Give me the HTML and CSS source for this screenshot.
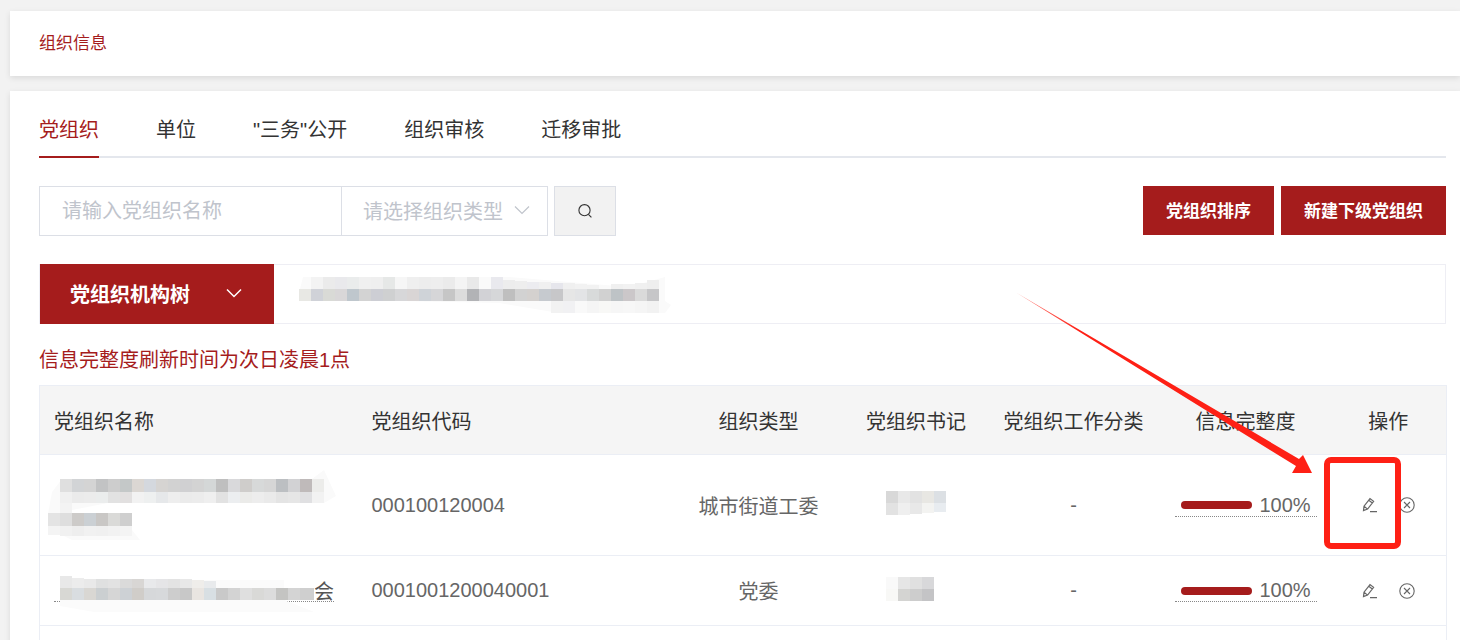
FILE: index.html
```html
<!DOCTYPE html>
<html lang="zh-CN">
<head>
  <meta charset="UTF-8">
  <title>组织信息</title>
  <link rel="stylesheet" href="styles.css">
</head>
<body>
  <div class="card title-card">组织信息</div>

  <div class="card main-card">
    <div class="tabs">
      <span class="tab active">党组织</span>
      <span class="tab">单位</span>
      <span class="tab">"三务"公开</span>
      <span class="tab">组织审核</span>
      <span class="tab">迁移审批</span>
    </div>

    <div class="toolbar">
      <input class="search-input" type="text" placeholder="请输入党组织名称">
      <div class="search-select">
        <span>请选择组织类型</span>
        <svg class="select-arrow" width="16" height="16" viewBox="0 0 16 16"><path d="M1 4.5l7 7 7-7" fill="none" stroke="#c0c4cc" stroke-width="1.2"/></svg>
      </div>
      <button class="search-btn" type="button">
        <svg width="16" height="16" viewBox="0 0 16 16"><circle cx="7.5" cy="7.2" r="5.6" fill="none" stroke="#333" stroke-width="1.1"/><path d="M11.4 11.4l3 3" fill="none" stroke="#333" stroke-width="1.1"/></svg>
      </button>
      <div class="toolbar-right">
        <button class="red-btn" type="button">党组织排序</button>
        <button class="red-btn" type="button">新建下级党组织</button>
      </div>
    </div>

    <div class="tree-bar">
      <div class="tree-toggle">
        <span>党组织机构树</span>
        <svg width="18" height="18" viewBox="0 0 18 18"><path d="M2 5.5l7 7 7-7" fill="none" stroke="#fff" stroke-width="1.5"/></svg>
      </div>
      <svg class="mosaic tree-mosaic" width="372" height="38" viewBox="0 0 372 38">
        <path d="M1 14 L4 2 H210 L330 12 L366 2 V26 L372 30 L366 38 H260 L200 28 L1 24z" fill="#fafafa"/>
        <g>
          <rect x="12" y="2" width="12" height="12" fill="#f3f3f3"/><rect x="24" y="2" width="12" height="12" fill="#ebebeb"/><rect x="36" y="2" width="12" height="12" fill="#e9e9ec"/><rect x="48" y="2" width="12" height="12" fill="#eaecec"/><rect x="60" y="2" width="12" height="12" fill="#f0f0f0"/><rect x="72" y="2" width="12" height="12" fill="#efefef"/><rect x="84" y="2" width="12" height="12" fill="#e6e8e7"/><rect x="96" y="2" width="12" height="12" fill="#f6f6f6"/><rect x="108" y="2" width="12" height="12" fill="#efefef"/><rect x="120" y="2" width="12" height="12" fill="#ededed"/><rect x="132" y="2" width="12" height="12" fill="#eeeeee"/><rect x="144" y="2" width="12" height="12" fill="#ebebeb"/><rect x="156" y="2" width="12" height="12" fill="#f4f4f4"/><rect x="168" y="2" width="12" height="12" fill="#e9e9e9"/><rect x="192" y="2" width="12" height="12" fill="#e9e9ee"/><rect x="204" y="5" width="12" height="9" fill="#ededed"/><rect x="216" y="6" width="12" height="8" fill="#eeeeee"/><rect x="228" y="7" width="12" height="7" fill="#ececf0"/><rect x="240" y="7" width="12" height="7" fill="#f0f0f0"/><rect x="252" y="8" width="12" height="6" fill="#e6e6ec"/><rect x="264" y="8" width="12" height="6" fill="#f0f0f0"/><rect x="276" y="9" width="12" height="5" fill="#f2f2f2"/><rect x="288" y="10" width="12" height="4" fill="#f2f2f2"/><rect x="312" y="9" width="12" height="5" fill="#f0f0f0"/><rect x="324" y="9" width="12" height="5" fill="#f2f2f2"/><rect x="336" y="8" width="12" height="6" fill="#f0f0f0"/><rect x="348" y="5" width="12" height="9" fill="#eeeeee"/>
        </g>
        <g>
          <rect x="0" y="14" width="12" height="12" fill="#e8e8e4"/><rect x="12" y="14" width="12" height="12" fill="#d0d2d8"/><rect x="24" y="14" width="12" height="12" fill="#d9dad6"/><rect x="36" y="14" width="12" height="12" fill="#d9d7d8"/><rect x="48" y="14" width="12" height="12" fill="#bfc7cd"/><rect x="60" y="14" width="12" height="12" fill="#d3d3d3"/><rect x="72" y="14" width="12" height="12" fill="#cdced4"/><rect x="84" y="14" width="12" height="12" fill="#cfd0d1"/><rect x="96" y="14" width="12" height="12" fill="#d7d7d9"/><rect x="108" y="14" width="12" height="12" fill="#d9d5d5"/><rect x="120" y="14" width="12" height="12" fill="#cfd3d8"/><rect x="132" y="14" width="12" height="12" fill="#d6d6d8"/><rect x="144" y="14" width="12" height="12" fill="#c6c6c6"/><rect x="156" y="14" width="12" height="12" fill="#dcdcdc"/><rect x="168" y="14" width="12" height="12" fill="#b2b3b6"/><rect x="180" y="14" width="12" height="12" fill="#d2d2d6"/><rect x="192" y="14" width="12" height="12" fill="#d6d7d9"/><rect x="204" y="14" width="12" height="12" fill="#bfbfbf"/><rect x="216" y="14" width="12" height="12" fill="#d2d2d2"/><rect x="228" y="14" width="12" height="12" fill="#d4d1cf"/><rect x="240" y="14" width="12" height="12" fill="#c6cacf"/><rect x="252" y="14" width="12" height="12" fill="#c7c7c9"/><rect x="264" y="14" width="12" height="12" fill="#e6e6e6"/><rect x="276" y="14" width="12" height="12" fill="#e3e4e6"/><rect x="288" y="14" width="12" height="12" fill="#d8dada"/><rect x="300" y="14" width="12" height="12" fill="#d1d1d1"/><rect x="312" y="14" width="12" height="12" fill="#bec3c6"/><rect x="324" y="14" width="12" height="12" fill="#cbc7c9"/><rect x="336" y="14" width="12" height="12" fill="#dadada"/><rect x="348" y="14" width="12" height="12" fill="#c6c6c8"/>
        </g>
        <g>
          <rect x="252" y="26" width="12" height="12" fill="#f2f2f2"/><rect x="264" y="26" width="12" height="12" fill="#f1f1f3"/><rect x="276" y="26" width="12" height="12" fill="#f9f9f9"/><rect x="288" y="26" width="12" height="12" fill="#f5f5f5"/><rect x="300" y="26" width="12" height="12" fill="#f8f8f6"/><rect x="312" y="26" width="12" height="12" fill="#f6f6f6"/><rect x="324" y="26" width="12" height="12" fill="#f7f7f7"/><rect x="336" y="26" width="12" height="12" fill="#f5f5f5"/><rect x="348" y="26" width="12" height="12" fill="#f2f2f2"/>
        </g>
      </svg>
    </div>

    <p class="notice">信息完整度刷新时间为次日凌晨1点</p>

    <table class="org-table">
      <colgroup>
        <col class="col-name"><col class="col-code"><col class="col-type"><col class="col-sec"><col class="col-cat"><col class="col-info"><col class="col-op">
      </colgroup>
      <thead>
        <tr>
          <th class="left">党组织名称</th>
          <th class="left">党组织代码</th>
          <th>组织类型</th>
          <th>党组织书记</th>
          <th>党组织工作分类</th>
          <th>信息完整度</th>
          <th>操作</th>
        </tr>
      </thead>
      <tbody>
        <tr class="row-tall">
          <td class="left">
            <svg class="mosaic name-mosaic" width="290" height="70" viewBox="0 0 290 70">
              <path d="M0 44 L4 22 L14 9 H264 L276 0 L288 26 L276 33 H60 L24 40 V60 L84 60 L92 70 H24 L4 60z" fill="#fafafa"/>
              <g>
                <rect x="12" y="9" width="12" height="13" fill="#dfdfdf"/><rect x="24" y="9" width="12" height="13" fill="#d2d4d6"/><rect x="36" y="9" width="12" height="13" fill="#d4d4d4"/><rect x="48" y="9" width="12" height="13" fill="#c2c3c4"/><rect x="60" y="9" width="12" height="13" fill="#cdcdcd"/><rect x="72" y="9" width="12" height="13" fill="#c4c8c8"/><rect x="84" y="9" width="12" height="13" fill="#dbd7d3"/><rect x="96" y="9" width="12" height="13" fill="#d4d8de"/><rect x="108" y="9" width="12" height="13" fill="#d6d4d2"/><rect x="120" y="9" width="12" height="13" fill="#d2d2d2"/><rect x="132" y="9" width="12" height="13" fill="#d0d0d2"/><rect x="144" y="9" width="12" height="13" fill="#d3d3d3"/><rect x="156" y="9" width="12" height="13" fill="#d4d7d7"/><rect x="168" y="9" width="12" height="13" fill="#bfbfbf"/><rect x="180" y="9" width="12" height="13" fill="#d9d9db"/><rect x="192" y="9" width="12" height="13" fill="#cfcdcb"/><rect x="204" y="9" width="12" height="13" fill="#d7d9d9"/><rect x="216" y="9" width="12" height="13" fill="#d6d6d6"/><rect x="228" y="9" width="12" height="13" fill="#bcbfc2"/><rect x="240" y="9" width="12" height="13" fill="#d2d2d4"/><rect x="252" y="9" width="12" height="13" fill="#bfbaba"/><rect x="264" y="9" width="12" height="13" fill="#ececea"/>
              </g>
              <g>
                <rect x="12" y="22" width="12" height="11" fill="#f0f0f0"/><rect x="24" y="22" width="12" height="11" fill="#ebebeb"/><rect x="36" y="22" width="12" height="11" fill="#ececec"/><rect x="48" y="22" width="12" height="11" fill="#ebeded"/><rect x="60" y="22" width="12" height="11" fill="#e2e2e2"/><rect x="72" y="22" width="12" height="11" fill="#e2e0e0"/><rect x="84" y="22" width="12" height="11" fill="#f2f2f2"/><rect x="96" y="22" width="12" height="11" fill="#eef0f0"/><rect x="108" y="22" width="12" height="11" fill="#e6e8ea"/><rect x="120" y="22" width="12" height="11" fill="#eeeeee"/><rect x="132" y="22" width="12" height="11" fill="#ebebeb"/><rect x="144" y="22" width="12" height="11" fill="#ececec"/><rect x="156" y="22" width="12" height="11" fill="#efefef"/><rect x="168" y="22" width="12" height="11" fill="#e2e2e2"/><rect x="180" y="22" width="12" height="11" fill="#eceef0"/><rect x="192" y="22" width="12" height="11" fill="#ebebe9"/><rect x="204" y="22" width="12" height="11" fill="#ededed"/><rect x="216" y="22" width="12" height="11" fill="#eaeaea"/><rect x="228" y="22" width="12" height="11" fill="#e4e4e4"/><rect x="240" y="22" width="12" height="11" fill="#e6e6e6"/><rect x="252" y="22" width="12" height="11" fill="#e0e0e2"/><rect x="264" y="22" width="12" height="11" fill="#f2f2f2"/>
              </g>
              <rect x="12" y="33" width="12" height="10" fill="#f3f3f3"/>
              <rect x="0" y="43" width="12" height="13" fill="#e4e4e4"/><rect x="12" y="43" width="12" height="13" fill="#dedede"/><rect x="24" y="43" width="12" height="13" fill="#cdcbc9"/><rect x="36" y="43" width="12" height="13" fill="#cbd0d4"/><rect x="48" y="43" width="12" height="13" fill="#c9c7c5"/><rect x="60" y="43" width="12" height="13" fill="#dadad8"/><rect x="72" y="43" width="12" height="13" fill="#cfcfcf"/>
              <rect x="0" y="56" width="12" height="9" fill="#f4f4f4"/><rect x="12" y="56" width="12" height="10" fill="#f1f1f1"/><rect x="24" y="56" width="12" height="10" fill="#eeeeee"/><rect x="36" y="56" width="12" height="10" fill="#f1f1f1"/><rect x="48" y="56" width="12" height="10" fill="#f0f0f0"/><rect x="60" y="56" width="12" height="10" fill="#f2f2f2"/><rect x="72" y="56" width="12" height="10" fill="#f4f4f4"/>
            </svg>
          </td>
          <td class="left">000100120004</td>
          <td>城市街道工委</td>
          <td>
            <svg class="mosaic" width="60" height="24" viewBox="0 0 60 24">
              <rect width="12" height="12" fill="#d8d8d8"/><rect x="12" width="12" height="12" fill="#e8e8e8"/><rect x="24" width="12" height="12" fill="#e2e2e2"/><rect x="36" width="12" height="12" fill="#e8e7e3"/><rect x="48" width="12" height="12" fill="#dce0e4"/>
              <rect y="12" width="12" height="12" fill="#e2e2e2"/><rect x="12" y="12" width="12" height="12" fill="#efefef"/><rect x="24" y="12" width="12" height="11" fill="#e8e8e8"/><rect x="36" y="12" width="12" height="10" fill="#f3f3f1"/><rect x="48" y="12" width="12" height="9" fill="#e8ecf0"/>
            </svg>
          </td>
          <td>-</td>
          <td>
            <div class="progress"><span class="progress-bar"></span><span>100%</span></div>
          </td>
          <td>
            <div class="ops">
              <svg width="16" height="16" viewBox="0 0 16 16"><path d="M1.5 13.6L2 9.2 8 1.6l3.6 2.7-6 7.8zM6.8 3.2l3.5 2.7M2 9.2l3.6 2.9M8 14.6h7" fill="none" stroke="#666" stroke-width="1.2"/></svg>
              <svg width="16" height="16" viewBox="0 0 16 16"><circle cx="8" cy="8" r="7.2" fill="none" stroke="#666" stroke-width="1.1"/><path d="M5 5l6 6M11 5l-6 6" fill="none" stroke="#666" stroke-width="1.1"/></svg>
            </div>
          </td>
        </tr>
        <tr class="row-normal">
          <td class="left">
            <span class="name-link">
              <svg class="mosaic" width="260" height="36" viewBox="0 0 260 36">
                <path d="M6 0 L18 4 H230 V24 L260 36 H40 L6 30z" fill="#fbfbfb"/>
                <g>
                  <rect x="6" y="0" width="12" height="12" fill="#e8e8e8"/><rect x="18" y="2" width="12" height="10" fill="#ececec"/><rect x="30" y="3" width="12" height="9" fill="#e9e9e9"/><rect x="42" y="3" width="12" height="9" fill="#dfe0e0"/><rect x="54" y="3" width="12" height="9" fill="#e2e2e2"/><rect x="66" y="3" width="12" height="9" fill="#dadada"/><rect x="78" y="3" width="12" height="9" fill="#d8d6d4"/><rect x="90" y="3" width="12" height="9" fill="#e8e9eb"/><rect x="102" y="3" width="12" height="9" fill="#e5e5e7"/><rect x="114" y="3" width="12" height="9" fill="#e3e3e3"/><rect x="126" y="3" width="12" height="9" fill="#e8e8e8"/><rect x="138" y="4" width="12" height="8" fill="#efedea"/><rect x="150" y="5" width="12" height="7" fill="#e8eaec"/>
                </g>
                <g>
                  <rect x="6" y="12" width="12" height="12" fill="#d8d8d4"/><rect x="18" y="12" width="12" height="12" fill="#d9dde0"/><rect x="30" y="12" width="12" height="12" fill="#d9d7d3"/><rect x="42" y="12" width="12" height="12" fill="#cbcfd1"/><rect x="54" y="12" width="12" height="12" fill="#d6d6d6"/><rect x="66" y="12" width="12" height="12" fill="#cdd1d5"/><rect x="78" y="12" width="12" height="12" fill="#d0cdc9"/><rect x="90" y="12" width="12" height="12" fill="#d6d8da"/><rect x="102" y="12" width="12" height="12" fill="#d7d9db"/><rect x="114" y="12" width="12" height="12" fill="#cdcdcd"/><rect x="126" y="12" width="12" height="12" fill="#c8c8c8"/><rect x="138" y="12" width="12" height="12" fill="#e9e5e1"/><rect x="150" y="12" width="12" height="12" fill="#d8dfe3"/><rect x="162" y="12" width="12" height="12" fill="#c9c9c9"/><rect x="174" y="12" width="12" height="12" fill="#d3d3d3"/><rect x="186" y="12" width="12" height="12" fill="#dfdfdf"/><rect x="198" y="12" width="12" height="12" fill="#d9d9d7"/><rect x="210" y="12" width="12" height="12" fill="#dcdcdc"/><rect x="222" y="12" width="12" height="12" fill="#c4c4c2"/><rect x="234" y="12" width="12" height="12" fill="#d4d4d4"/><rect x="246" y="12" width="14" height="12" fill="#cfcfcf"/>
                </g>
              </svg>
              <span>会</span>
            </span>
          </td>
          <td class="left">0001001200040001</td>
          <td>党委</td>
          <td>
            <svg class="mosaic" width="60" height="24" viewBox="0 0 60 24">
              <rect width="12" height="12" fill="#f9f9f9"/><rect x="12" width="12" height="12" fill="#e6e6e6"/><rect x="24" width="12" height="12" fill="#e0e0e0"/><rect x="36" width="12" height="12" fill="#d8d8da"/>
              <rect y="12" width="12" height="12" fill="#f8f8f6"/><rect x="12" y="12" width="12" height="12" fill="#d4d4d2"/><rect x="24" y="12" width="12" height="12" fill="#cdcdcd"/><rect x="36" y="12" width="12" height="12" fill="#c4c4c6"/>
            </svg>
          </td>
          <td>-</td>
          <td>
            <div class="progress"><span class="progress-bar"></span><span>100%</span></div>
          </td>
          <td>
            <div class="ops">
              <svg width="16" height="16" viewBox="0 0 16 16"><path d="M1.5 13.6L2 9.2 8 1.6l3.6 2.7-6 7.8zM6.8 3.2l3.5 2.7M2 9.2l3.6 2.9M8 14.6h7" fill="none" stroke="#666" stroke-width="1.2"/></svg>
              <svg width="16" height="16" viewBox="0 0 16 16"><circle cx="8" cy="8" r="7.2" fill="none" stroke="#666" stroke-width="1.1"/><path d="M5 5l6 6M11 5l-6 6" fill="none" stroke="#666" stroke-width="1.1"/></svg>
            </div>
          </td>
        </tr>
        <tr class="row-normal"><td></td><td></td><td></td><td></td><td></td><td></td><td></td></tr>
      </tbody>
    </table>
  </div>

  <!-- red arrow and box drawn on top of the screenshot -->
  <svg class="annotation" width="1460" height="640" viewBox="0 0 1460 640">
    <defs>
      <linearGradient id="arrowFade" gradientUnits="userSpaceOnUse" x1="1015" y1="292" x2="1080" y2="330">
        <stop offset="0" stop-color="#fe2015" stop-opacity="0.5"/>
        <stop offset="1" stop-color="#fe2015"/>
      </linearGradient>
    </defs>
    <path d="M1015 292L1299 459 1303 455 1312 473 1292 473 1296 466z" fill="url(#arrowFade)"/>
    <rect x="1327" y="460" width="71" height="86" rx="4" fill="none" stroke="#fe2015" stroke-width="6"/>
  </svg>
</body>
</html>
```

FILE: styles.css
```css
* {
  margin: 0;
  padding: 0;
  box-sizing: border-box;
}
html, body {
  height: 100%;
  overflow: hidden;
}
body {
  position: relative;
  background: #f2f2f2;
  font-family: "Liberation Sans", "Noto Sans CJK SC", sans-serif;
  color: #333;
  padding-top: 11px;
}
.card {
  margin-left: 10px;
  background: #fff;
  box-shadow: 0 2px 6px rgba(0, 0, 0, 0.1);
}
.title-card {
  height: 65px;
  line-height: 65px;
  padding-left: 29px;
  font-size: 17px;
  color: #a51c1c;
}
.main-card {
  margin-top: 15px;
  padding: 23px 14px 0 29px;
}

/* tabs */
.tabs {
  display: flex;
  gap: 57px;
  border-bottom: 2px solid #e4e7ed;
}
.tab {
  font-size: 20px;
  line-height: 30px;
  padding-top: 1px;
  padding-bottom: 11px;
  margin-bottom: -2px;
  border-bottom: 2px solid transparent;
}
.tab.active {
  color: #a51c1c;
  border-bottom-color: #a51c1c;
}

/* search row */
.toolbar {
  display: flex;
  margin-top: 28px;
  height: 50px;
}
.search-input {
  width: 302px;
  height: 50px;
  padding-left: 22px;
  border: 1px solid #dcdfe6;
  border-right: none;
  outline: none;
  font-size: 20px;
  font-family: inherit;
}
.search-input::placeholder {
  color: #c0c4cc;
}
.search-select {
  display: flex;
  align-items: center;
  width: 207px;
  padding-left: 21px;
  padding-bottom: 2px;
  border: 1px solid #dcdfe6;
  font-size: 20px;
  color: #c0c4cc;
}
.select-arrow {
  margin-left: 11px;
}
.search-btn {
  display: flex;
  align-items: center;
  justify-content: center;
  width: 62px;
  margin-left: 6px;
  background: #f2f2f2;
  border: 1px solid #dcdfe6;
}
.toolbar-right {
  display: flex;
  gap: 7px;
  margin-left: auto;
}
.red-btn {
  height: 49px;
  padding: 0 23px 2px;
  background: #a51c1c;
  border: none;
  color: #fff;
  font-family: inherit;
  font-size: 17px;
  font-weight: bold;
}

/* tree bar */
.tree-bar {
  display: flex;
  align-items: center;
  height: 60px;
  margin-top: 28px;
  border: 1px solid #eeeef4;
}
.tree-toggle {
  display: flex;
  align-items: center;
  gap: 35px;
  width: 234px;
  height: 60px;
  padding: 0 0 2px 30px;
  background: #a51c1c;
  color: #fff;
  font-size: 20px;
  font-weight: bold;
}
.mosaic {
  display: block;
  flex: none;
}
.tree-mosaic {
  margin-left: 25px;
}
.notice {
  margin-top: 21px;
  font-size: 20px;
  line-height: 30px;
  color: #a51c1c;
}

/* table */
.org-table {
  width: 1407px;
  margin-top: 10px;
  table-layout: fixed;
  border-collapse: collapse;
  font-size: 20px;
}
.col-name { width: 318px; }
.col-code { width: 314px; }
.col-type { width: 174px; }
.col-sec { width: 141px; }
.col-cat { width: 174px; }
.col-info { width: 170px; }
.col-op { width: 116px; }
.org-table th,
.org-table td {
  padding: 0 14px;
  border: 1px solid #ebeef5;
  border-width: 1px 0;
  text-align: center;
  font-weight: normal;
}
.org-table th {
  height: 69px;
  background: #f5f5f5;
  color: #333;
}
.org-table td {
  color: #666;
}
.org-table th:first-child,
.org-table td:first-child {
  border-left-width: 1px;
}
.org-table th:last-child,
.org-table td:last-child {
  border-right-width: 1px;
}
.org-table .left {
  text-align: left;
}
.row-tall { height: 101px; }
.row-normal { height: 70px; }
.name-mosaic {
  margin-left: -6px;
}
.org-table td > .mosaic:not(.name-mosaic) {
  margin: -2px auto 2px;
}
.name-link {
  display: inline-flex;
  align-items: center;
  height: 22px;
  border-bottom: 1px dotted #888;
  color: #555;
  vertical-align: middle;
}
.name-link .mosaic {
  margin: -4px 0 -10px;
}

/* completeness */
.progress {
  display: inline-flex;
  align-items: center;
  gap: 8px;
  height: 22px;
  margin-right: 3px;
  padding: 0 6px;
  border-bottom: 1px dotted #888;
  vertical-align: middle;
}
.progress-bar {
  width: 71px;
  height: 8px;
  border-radius: 4px;
  background: #a51c1c;
}
.ops {
  display: flex;
  justify-content: center;
  gap: 21px;
}

.annotation {
  position: absolute;
  left: 0;
  top: 0;
  pointer-events: none;
}
```
